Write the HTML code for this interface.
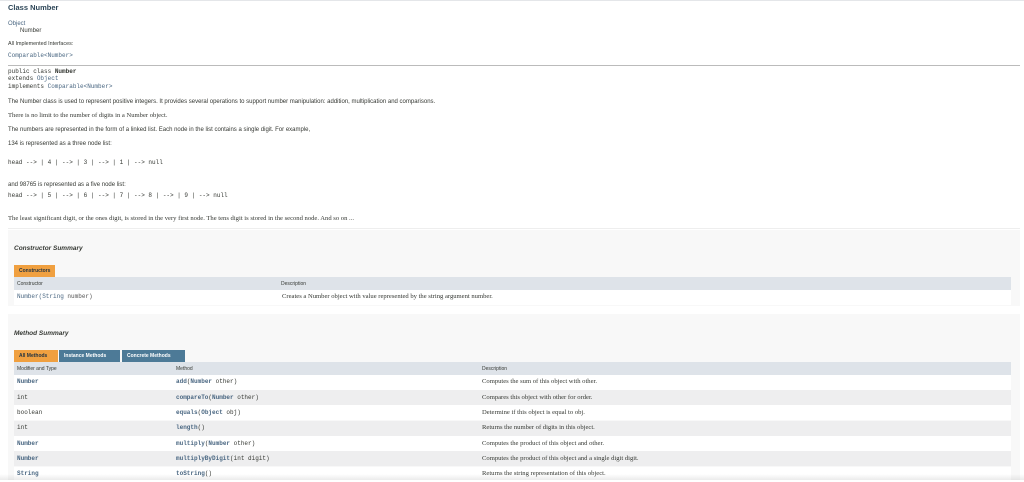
<!DOCTYPE html>
<html><head><meta charset="utf-8"><style>
body{margin:0;width:1024px;height:480px;overflow:hidden;background:#fff;font-family:"Liberation Sans",sans-serif;color:#353833;position:relative}
.a{position:absolute;white-space:nowrap}
.s{font-size:6px}
.m{font-family:"Liberation Mono",monospace;font-size:6px}
.serif{font-family:"Liberation Serif",serif;font-size:6.6px}
.l{color:#4a6782}
.b{font-weight:bold}
.panel{position:absolute;background:#f8f8f8}
.tab{position:absolute;height:12px;line-height:12px;font-size:5px;font-weight:bold;padding:0 5px;color:#fff}
.row{position:absolute;left:14px;width:997px;height:15px}
</style></head><body>
<div class="a" style="left:0;top:0;width:1024px;height:1px;background:#e4e6e9"></div>
<div class="a b" style="left:8px;top:3px;font-size:7.5px;color:#2c4557">Class Number</div>
<div class="a s l" style="left:8px;top:21px">Object</div>
<div class="a s" style="left:20px;top:28px">Number</div>
<div class="a s" style="left:8px;top:41px;font-size:5.4px">All Implemented Interfaces:</div>
<div class="a m l" style="left:8px;top:52px">Comparable&lt;Number&gt;</div>
<div class="a" style="left:8px;top:65px;width:1012px;height:1px;background:#bbb"></div>
<div class="a m" style="left:8px;top:68px"><span>public class </span><b>Number</b></div>
<div class="a m" style="left:8px;top:75px">extends <span class="l">Object</span></div>
<div class="a m" style="left:8px;top:83px">implements <span class="l">Comparable&lt;Number&gt;</span></div>
<div class="a s" style="left:8px;top:99px">The Number class is used to represent positive integers. It provides several operations to support number manipulation: addition, multiplication and comparisons.</div>
<div class="a serif" style="left:8px;top:112px">There is no limit to the number of digits in a Number object.</div>
<div class="a s" style="left:8px;top:127px">The numbers are represented in the form of a linked list. Each node in the list contains a single digit. For example,</div>
<div class="a s" style="left:8px;top:141px">134 is represented as a three node list:</div>
<div class="a m" style="left:8px;top:159px"> head --&gt; | 4 | --&gt; | 3 | --&gt; | 1 | --&gt; null</div>
<div class="a s" style="left:8px;top:182px">and 98765 is represented as a five node list:</div>
<div class="a m" style="left:8px;top:192px"> head --&gt; | 5 | --&gt; | 6 | --&gt; | 7 | --&gt;  8 | --&gt; | 9 | --&gt; null</div>
<div class="a serif" style="left:8px;top:215px">The least significant digit, or the ones digit, is stored in the very first node. The tens digit is stored in the second node. And so on ...</div>
<div class="a" style="left:8px;top:228px;width:1012px;height:1px;background:#eee"></div>

<div class="panel" style="left:8px;top:230px;width:1012px;height:76px"></div>
<div class="a b" style="left:14px;top:245px;font-size:6.5px;font-style:italic">Constructor Summary</div>
<div class="tab" style="left:14px;top:265px;background:#f0a040;color:#253441">Constructors</div>
<div class="row" style="top:277px;height:13px;background:#dee3e9"></div>
<div class="a s" style="left:17px;top:281px;font-size:5px">Constructor</div>
<div class="a s" style="left:281px;top:281px;font-size:5px">Description</div>
<div class="row" style="top:290px;background:#fff"></div>
<div class="a m l" style="left:17px;top:293px">Number(String <span style="color:#555">number)</span></div>
<div class="a serif" style="left:282px;top:293px">Creates a Number object with value represented by the string argument number.</div>

<div class="panel" style="left:8px;top:314px;width:1012px;height:166px"></div>
<div class="a b" style="left:14px;top:330px;font-size:6.5px;font-style:italic">Method Summary</div>
<div class="tab" style="left:14px;top:350px;width:34px;background:#f0a040;color:#253441">All Methods</div>
<div class="tab" style="left:59px;top:350px;width:51px;background:#4d7a97">Instance Methods</div>
<div class="tab" style="left:122px;top:350px;width:53px;background:#4d7a97">Concrete Methods</div>
<div class="row" style="top:362px;height:13px;background:#dee3e9"></div>
<div class="a s" style="left:17px;top:366px;font-size:5px">Modifier and Type</div>
<div class="a s" style="left:176px;top:366px;font-size:5px">Method</div>
<div class="a s" style="left:482px;top:366px;font-size:5px">Description</div>

<div class="row" style="top:375px;background:#fff"></div>
<div class="a m l b" style="left:17px;top:378px">Number</div>
<div class="a m" style="left:176px;top:378px"><b class="l">add</b>(<b class="l">Number</b> other)</div>
<div class="a serif" style="left:482px;top:378px">Computes the sum of this object with other.</div>

<div class="row" style="top:390px;background:#eeeeef"></div>
<div class="a m" style="left:17px;top:394px">int</div>
<div class="a m" style="left:176px;top:394px"><b class="l">compareTo</b>(<b class="l">Number</b> other)</div>
<div class="a serif" style="left:482px;top:394px">Compares this object with other for order.</div>

<div class="row" style="top:405px;background:#fff"></div>
<div class="a m" style="left:17px;top:409px">boolean</div>
<div class="a m" style="left:176px;top:409px"><b class="l">equals</b>(<b class="l">Object</b> obj)</div>
<div class="a serif" style="left:482px;top:409px">Determine if this object is equal to obj.</div>

<div class="row" style="top:421px;background:#eeeeef"></div>
<div class="a m" style="left:17px;top:424px">int</div>
<div class="a m" style="left:176px;top:424px"><b class="l">length</b>()</div>
<div class="a serif" style="left:482px;top:424px">Returns the number of digits in this object.</div>

<div class="row" style="top:436px;background:#fff"></div>
<div class="a m l b" style="left:17px;top:440px">Number</div>
<div class="a m" style="left:176px;top:440px"><b class="l">multiply</b>(<b class="l">Number</b> other)</div>
<div class="a serif" style="left:482px;top:440px">Computes the product of this object and other.</div>

<div class="row" style="top:451px;background:#eeeeef"></div>
<div class="a m l b" style="left:17px;top:455px">Number</div>
<div class="a m" style="left:176px;top:455px"><b class="l">multiplyByDigit</b>(int digit)</div>
<div class="a serif" style="left:482px;top:455px">Computes the product of this object and a single digit digit.</div>

<div class="row" style="top:467px;background:#fff"></div>
<div class="a m l b" style="left:17px;top:470px">String</div>
<div class="a m" style="left:176px;top:470px"><b class="l">toString</b>()</div>
<div class="a serif" style="left:482px;top:470px">Returns the string representation of this object.</div>
<div class="a" style="left:0;top:474px;width:1024px;height:6px;background:linear-gradient(rgba(0,0,0,0),rgba(0,0,0,0.08))"></div>
</body></html>
